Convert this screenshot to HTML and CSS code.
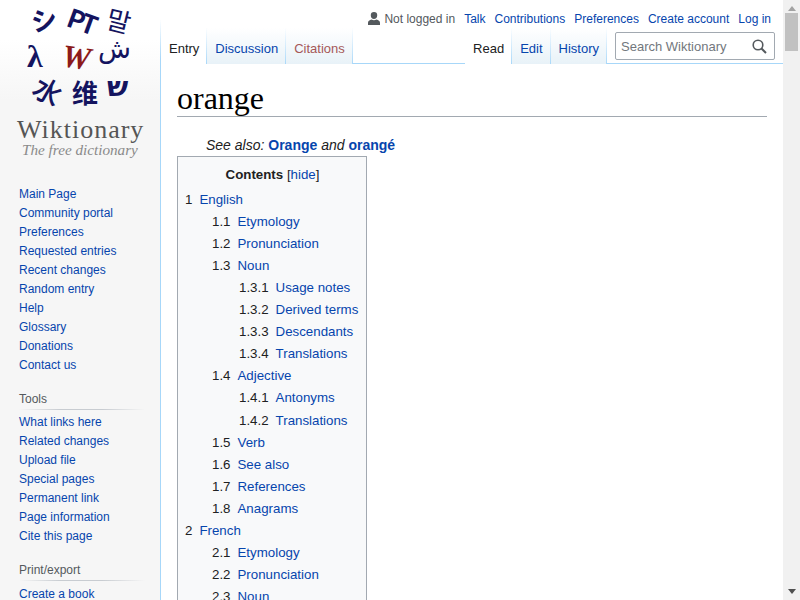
FILE: index.html
```html
<!DOCTYPE html>
<html lang="en">
<head>
  <meta charset="UTF-8" />
  <meta name="viewport" content="width=device-width, initial-scale=1.0" />
  <title>orange - Wiktionary</title>
  <link rel="stylesheet" href="styles.css">
</head>
<body>
  <div class="page">
    <div class="sidebar">
      <div class="logo">
        <span class="glyph g1">シ</span>
        <span class="glyph g2">PT</span>
        <span class="glyph g3">말</span>
        <span class="glyph g4">λ</span>
        <span class="glyph g5">W</span>
        <span class="glyph g6">ش</span>
        <span class="glyph g7">水</span>
        <span class="glyph g8">维</span>
        <span class="glyph g9">ש</span>
        <span class="logo-name">Wiktionary</span>
        <span class="logo-tag">The free dictionary</span>
      </div>
      <ul class="nav nav-first">
        <li><a href="#">Main Page</a></li>
        <li><a href="#">Community portal</a></li>
        <li><a href="#">Preferences</a></li>
        <li><a href="#">Requested entries</a></li>
        <li><a href="#">Recent changes</a></li>
        <li><a href="#">Random entry</a></li>
        <li><a href="#">Help</a></li>
        <li><a href="#">Glossary</a></li>
        <li><a href="#">Donations</a></li>
        <li><a href="#">Contact us</a></li>
      </ul>
      <h3>Tools</h3>
      <ul class="nav">
        <li><a href="#">What links here</a></li>
        <li><a href="#">Related changes</a></li>
        <li><a href="#">Upload file</a></li>
        <li><a href="#">Special pages</a></li>
        <li><a href="#">Permanent link</a></li>
        <li><a href="#">Page information</a></li>
        <li><a href="#">Cite this page</a></li>
      </ul>
      <h3>Print/export</h3>
      <ul class="nav nav-last">
        <li><a href="#">Create a book</a></li>
      </ul>
    </div>

    <div class="main">
      <div class="personal">
        <svg class="user-icon" width="12" height="13" viewBox="0 0 12 13"><path d="M6 0a3.200 3.200 0 0 1 3.200 3.400C9.200 5.400 7.900 7 6 7S2.800 5.400 2.800 3.400A3.200 3.200 0 0 1 6 0zM0 13v-2.300C0 9 1.500 8.200 3.600 7.500c.7.500 1.500.8 2.400.8s1.700-.3 2.400-.8C10.500 8.200 12 9 12 10.700V13z" fill="#54595d"/></svg>
        <span class="not-logged">Not logged in</span>
        <a href="#">Talk</a>
        <a href="#">Contributions</a>
        <a href="#">Preferences</a>
        <a href="#">Create account</a>
        <a href="#">Log in</a>
      </div>
      <div class="tabbar">
        <div class="tabs">
          <a class="tab selected" href="#">Entry</a>
          <a class="tab" href="#">Discussion</a>
          <a class="tab new" href="#">Citations</a>
        </div>
        <div class="tabs tabs-right">
          <a class="tab selected" href="#">Read</a>
          <a class="tab" href="#">Edit</a>
          <a class="tab" href="#">History</a>
          <div class="search">
            <span>Search Wiktionary</span>
            <svg width="15" height="15" viewBox="0 0 15 15"><circle cx="6" cy="6" r="4.800" fill="none" stroke="#54595d" stroke-width="1.600"/><path d="M9.500 9.500L14 14" stroke="#54595d" stroke-width="2"/></svg>
          </div>
        </div>
      </div>
      <div class="article">
        <h1>orange</h1>
        <p class="see-also">See also: <a href="#">Orange</a> and <a href="#">orangé</a></p>
        <div class="toc">
          <div class="toc-title"><b>Contents</b> [<a href="#">hide</a>]</div>
          <ul>
            <li><span>1</span><a href="#">English</a>
              <ul>
                <li><span>1.1</span><a href="#">Etymology</a></li>
                <li><span>1.2</span><a href="#">Pronunciation</a></li>
                <li><span>1.3</span><a href="#">Noun</a>
                  <ul>
                    <li><span>1.3.1</span><a href="#">Usage notes</a></li>
                    <li><span>1.3.2</span><a href="#">Derived terms</a></li>
                    <li><span>1.3.3</span><a href="#">Descendants</a></li>
                    <li><span>1.3.4</span><a href="#">Translations</a></li>
                  </ul>
                </li>
                <li><span>1.4</span><a href="#">Adjective</a>
                  <ul>
                    <li><span>1.4.1</span><a href="#">Antonyms</a></li>
                    <li><span>1.4.2</span><a href="#">Translations</a></li>
                  </ul>
                </li>
                <li><span>1.5</span><a href="#">Verb</a></li>
                <li><span>1.6</span><a href="#">See also</a></li>
                <li><span>1.7</span><a href="#">References</a></li>
                <li><span>1.8</span><a href="#">Anagrams</a></li>
              </ul>
            </li>
            <li><span>2</span><a href="#">French</a>
              <ul>
                <li><span>2.1</span><a href="#">Etymology</a></li>
                <li><span>2.2</span><a href="#">Pronunciation</a></li>
                <li><span>2.3</span><a href="#">Noun</a></li>
              </ul>
            </li>
          </ul>
        </div>
      </div>
    </div>

    <div class="scrollbar">
      <div class="arrow-up"></div>
      <div class="thumb"></div>
      <div class="arrow-down"></div>
    </div>
  </div>
</body>
</html>
```

FILE: styles.css
```css
html, body {
  margin: 0;
  height: 600px;
  overflow: hidden;
}
body {
  font-family: "Liberation Sans", Arial, sans-serif;
  color: #202122;
  background-color: #fff;
}
a {
  color: #0645ad;
  text-decoration: none;
}
ul {
  list-style: none;
  margin: 0;
  padding: 0;
}
.page {
  display: flex;
  height: 600px;
  overflow: hidden;
}

/* sidebar */
.sidebar {
  width: 160px;
  flex: none;
  background: linear-gradient(#fff 40px, #f6f6f6 100px);
  font-size: 12px;
}
.logo {
  position: relative;
  height: 160px;
  margin-bottom: 25px;
}
.glyph {
  position: absolute;
  color: #14145f;
  font-family: "Noto Sans CJK JP", "DejaVu Sans", sans-serif;
  line-height: 1.4;
  white-space: nowrap;
}
.g1 { left: 31px; top: 1px; font-size: 26px; font-weight: 700; transform: rotate(-10deg); }
.g2 { left: 68px; top: 2px; font-size: 26px; font-weight: 700; transform: rotate(20deg); letter-spacing: -3px; }
.g3 { left: 107px; top: 2px; font-size: 26px; font-family: "Noto Sans CJK KR", sans-serif; transform: rotate(14deg); }
.g4 { left: 27px; top: 34px; font-size: 32px; font-weight: 700; font-family: "Liberation Serif", serif; }
.g5 { left: 62px; top: 35px; font-size: 32px; font-family: "Liberation Serif", serif; font-style: italic; font-weight: 700; color: #8c1a1a; transform: rotate(8deg); }
.g6 { left: 98px; top: 30px; font-size: 27px; font-family: "DejaVu Sans", sans-serif; }
.g7 { left: 34px; top: 71px; font-size: 28px; transform: rotate(30deg); font-weight: 500; }
.g8 { left: 72px; top: 74px; font-size: 26px; font-weight: 700; font-family: "Noto Sans CJK SC", sans-serif; }
.g9 { left: 107px; top: 67px; font-size: 28px; font-family: "DejaVu Sans", sans-serif; font-weight: 700; }
.logo-name {
  position: absolute;
  left: 17px;
  top: 118px;
  font-family: "Liberation Serif", serif;
  font-size: 26px;
  line-height: 24px;
  letter-spacing: 1px;
  color: #555;
  white-space: nowrap;
}
.logo-tag {
  position: absolute;
  left: 22px;
  top: 142px;
  font-family: "Liberation Serif", serif;
  font-style: italic;
  font-size: 15.200px;
  line-height: 15px;
  color: #8a8a8a;
  white-space: nowrap;
}
.nav {
  margin: 3px 0 0 19px;
  line-height: 19px;
}
.nav-first {
  margin-top: 0;
}
.nav-last {
  margin-top: 4px;
}
.sidebar h3 {
  margin: 15px 15px 0 19px;
  font-size: 12px;
  font-weight: normal;
  line-height: 19px;
  color: #54595d;
  background: linear-gradient(to right, #f6f6f6, #c8ccd1 33%, #c8ccd1 66%, #f6f6f6) no-repeat bottom / 100% 1px;
  padding-bottom: 1px;
}

/* main column */
.main {
  flex: 1;
  min-width: 0;
  border-left: 1px solid;
  border-image: linear-gradient(#fff 20px, #a7d7f9 60px) 1;
}
.personal {
  display: flex;
  justify-content: flex-end;
  align-items: center;
  gap: 9px;
  height: 28px;
  padding: 9px 12px 0 0;
  box-sizing: border-box;
  font-size: 12px;
}
.user-icon {
  margin-right: -5px;
}
.not-logged {
  color: #54595d;
}
.tabbar {
  display: flex;
  justify-content: space-between;
  height: 35px;
  border-bottom: 1px solid #a7d7f9;
}
.tabs {
  display: flex;
}
.tab {
  height: 36px;
  padding: 0 8px;
  box-sizing: border-box;
  font-size: 13px;
  line-height: 42px;
  white-space: nowrap;
  background: linear-gradient(#fff, #e8f2f8);
  border-right: 1px solid;
  border-image: linear-gradient(#fff, #a7d7f9) 1;
}
.tab.selected {
  padding-right: 7px;
  background: #fff;
  color: #202122;
  border-image: none;
  border-right: 0;
}
.tab.selected + .tab {
  border-left: 1px solid;
  padding-right: 7px;
}
.tab.new {
  padding-right: 7px;
  color: #a55858;
}
.tabs-right .tab:nth-child(3) {
  padding-right: 7px;
}
.search {
  display: flex;
  align-items: center;
  justify-content: space-between;
  width: 160px;
  height: 28px;
  margin: 4px 8px 0 8px;
  padding: 0 7px 0 5px;
  box-sizing: border-box;
  border: 1px solid #a2a9b1;
  border-radius: 2px;
  background: #fff;
  font-size: 13px;
  color: #72777d;
}
.article {
  padding: 0 16px;
}
h1 {
  margin: 0;
  height: 53px;
  box-sizing: border-box;
  padding-top: 15px;
  font-family: "Liberation Serif", serif;
  font-size: 32px;
  font-weight: normal;
  line-height: 38px;
  color: #000;
  border-bottom: 1px solid #a2a9b1;
}
.see-also {
  margin: 19px 0 0 29px;
  font-size: 14px;
  line-height: 19px;
  font-style: italic;
}
.see-also a {
  font-style: normal;
  font-weight: 700;
}
.toc {
  width: 190px;
  box-sizing: border-box;
  margin-top: 1px;
  padding: 7px;
  background-color: #f8f9fa;
  border: 1px solid #a2a9b1;
  font-size: 13.300px;
  line-height: 22.100px;
}
.toc-title {
  padding-left: 1px;
  text-align: center;
  margin-bottom: 2.500px;
}
.toc span {
  padding-right: 7px;
}
.toc ul ul {
  margin-left: 27px;
}

/* fake scrollbar */
.scrollbar {
  width: 17px;
  flex: none;
  display: flex;
  flex-direction: column;
  align-items: center;
  background-color: #f1f1f1;
}
.arrow-up {
  margin-top: 6px;
  border: 4px solid transparent;
  border-top: 0;
  border-bottom: 5px solid #a3a3a3;
}
.thumb {
  width: 13px;
  height: 38px;
  margin-top: 2px;
  background-color: #c1c1c1;
}
.arrow-down {
  margin-top: auto;
  margin-bottom: 6px;
  border: 4px solid transparent;
  border-bottom: 0;
  border-top: 5px solid #505050;
}
```
